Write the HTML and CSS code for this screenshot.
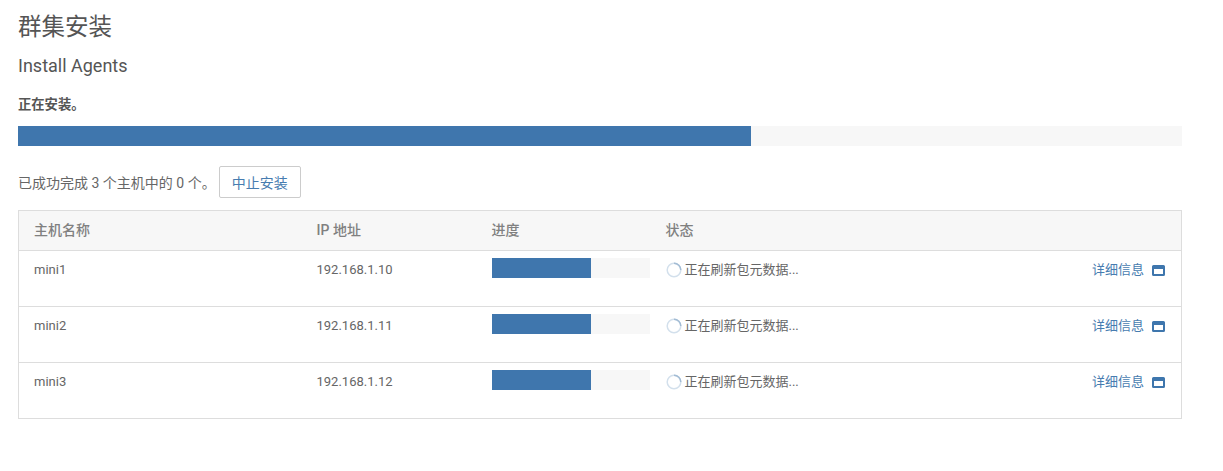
FILE: index.html
```html
<!DOCTYPE html>
<html>
    <head>
        <title>群集安装</title>
        <link rel="stylesheet" href="styles.css">
    </head>
    <body>
        <div class="main-container">
            <h1 class="page-title">群集安装</h1>
            <h2 class="sub-title">Install Agents</h2>
            <p class="install-status">正在安装。</p>
            <div class="progress main-progress">
                <div class="progress-bar"></div>
            </div>
            <div class="summary">
                <span>已成功完成 3 个主机中的 0 个。</span>
                <button class="abort-btn">中止安装</button>
            </div>
            <table class="host-table">
                <thead>
                    <tr>
                        <th class="col-name">主机名称</th>
                        <th class="col-ip">IP 地址</th>
                        <th class="col-progress">进度</th>
                        <th>状态</th>
                        <th class="col-details"></th>
                    </tr>
                </thead>
                <tbody>
                    <tr>
                        <td>mini1</td>
                        <td>192.168.1.10</td>
                        <td class="cell-progress"><div class="progress"><div class="progress-bar"></div></div></td>
                        <td><span class="status"><svg class="spinner" viewBox="0 0 16 16"><circle cx="8" cy="8" r="6.8" fill="none" stroke="#d3e0ec" stroke-width="1.5"/><path d="M8 1.2a6.8 6.8 0 0 1 6.8 6.8" fill="none" stroke="#a3bcd4" stroke-width="1.5"/></svg>正在刷新包元数据...</span></td>
                        <td class="cell-details"><a class="details-link" href="#">详细信息<svg class="window-icon" viewBox="0 0 13 11"><rect x="1" y="1" width="11" height="9" rx="0.5" fill="none" stroke="#3e76ad" stroke-width="2"/><rect x="1" y="1" width="11" height="3" fill="#3e76ad"/></svg></a></td>
                    </tr>
                    <tr>
                        <td>mini2</td>
                        <td>192.168.1.11</td>
                        <td class="cell-progress"><div class="progress"><div class="progress-bar"></div></div></td>
                        <td><span class="status"><svg class="spinner" viewBox="0 0 16 16"><circle cx="8" cy="8" r="6.8" fill="none" stroke="#d3e0ec" stroke-width="1.5"/><path d="M8 1.2a6.8 6.8 0 0 1 6.8 6.8" fill="none" stroke="#a3bcd4" stroke-width="1.5"/></svg>正在刷新包元数据...</span></td>
                        <td class="cell-details"><a class="details-link" href="#">详细信息<svg class="window-icon" viewBox="0 0 13 11"><rect x="1" y="1" width="11" height="9" rx="0.5" fill="none" stroke="#3e76ad" stroke-width="2"/><rect x="1" y="1" width="11" height="3" fill="#3e76ad"/></svg></a></td>
                    </tr>
                    <tr>
                        <td>mini3</td>
                        <td>192.168.1.12</td>
                        <td class="cell-progress"><div class="progress"><div class="progress-bar"></div></div></td>
                        <td><span class="status"><svg class="spinner" viewBox="0 0 16 16"><circle cx="8" cy="8" r="6.8" fill="none" stroke="#d3e0ec" stroke-width="1.5"/><path d="M8 1.2a6.8 6.8 0 0 1 6.8 6.8" fill="none" stroke="#a3bcd4" stroke-width="1.5"/></svg>正在刷新包元数据...</span></td>
                        <td class="cell-details"><a class="details-link" href="#">详细信息<svg class="window-icon" viewBox="0 0 13 11"><rect x="1" y="1" width="11" height="9" rx="0.5" fill="none" stroke="#3e76ad" stroke-width="2"/><rect x="1" y="1" width="11" height="3" fill="#3e76ad"/></svg></a></td>
                    </tr>
                </tbody>
            </table>
        </div>
    </body>
</html>
```

FILE: styles.css
```css
body {
    margin: 0;
    padding: 0;
    font-family: Roboto, "Noto Sans CJK SC", sans-serif;
    font-size: 13px;
    color: #666;
    background-color: #fff;
}
.main-container {
    width: 1164px;
    padding: 13px 0 0 18px;
}
.page-title {
    margin: 0;
    font-size: 23.5px;
    font-weight: 400;
    line-height: 28px;
    color: #555;
}
.sub-title {
    margin: 13px 0 0;
    font-size: 18px;
    font-weight: 400;
    line-height: 24px;
    color: #555;
}
.install-status {
    margin: 17px 0 0;
    font-size: 13.3px;
    font-weight: 700;
    line-height: 20px;
    color: #555;
}
.progress {
    height: 20px;
    background-color: #f7f7f7;
}
.progress-bar {
    width: 63%;
    height: 100%;
    background-color: #3f76ad;
}
.main-progress {
    margin-top: 11px;
}
.summary {
    display: flex;
    align-items: center;
    gap: 3px;
    margin-top: 20px;
    height: 32px;
    font-size: 14px;
}
.abort-btn {
    width: 82px;
    height: 32px;
    padding: 0;
    font-family: inherit;
    font-size: 14px;
    color: #477cb0;
    background-color: #fff;
    border: 1px solid #ccc;
    border-radius: 2px;
}
.host-table {
    width: 100%;
    margin-top: 12px;
    border-collapse: collapse;
    table-layout: fixed;
    border: 1px solid #ddd;
}
.host-table th {
    height: 40px;
    padding: 0 15px 4px;
    box-sizing: border-box;
    text-align: left;
    font-size: 14px;
    font-weight: 500;
    color: #808080;
    background-color: #f7f7f7;
    border-bottom: 1px solid #ddd;
}
.host-table td {
    height: 56px;
    padding: 10px 15px 0;
    box-sizing: border-box;
    vertical-align: top;
    line-height: 18px;
    border-bottom: 1px solid #ddd;
}
.host-table .progress-bar {
    width: 62.7%;
}
.col-name {
    width: 283px;
}
.col-ip {
    width: 175px;
}
.col-progress {
    width: 174px;
}
.col-details {
    width: 170px;
}
.host-table .cell-progress {
    padding: 7px 1px 0 15px;
}
.status {
    display: inline-flex;
    align-items: center;
    gap: 3px;
}
.spinner {
    width: 16px;
    height: 16px;
}
.cell-details {
    text-align: right;
}
.details-link {
    display: inline-flex;
    align-items: center;
    gap: 8px;
    margin-right: 1px;
    color: #477cb0;
    text-decoration: none;
}
.window-icon {
    width: 13px;
    height: 11px;
}
```
